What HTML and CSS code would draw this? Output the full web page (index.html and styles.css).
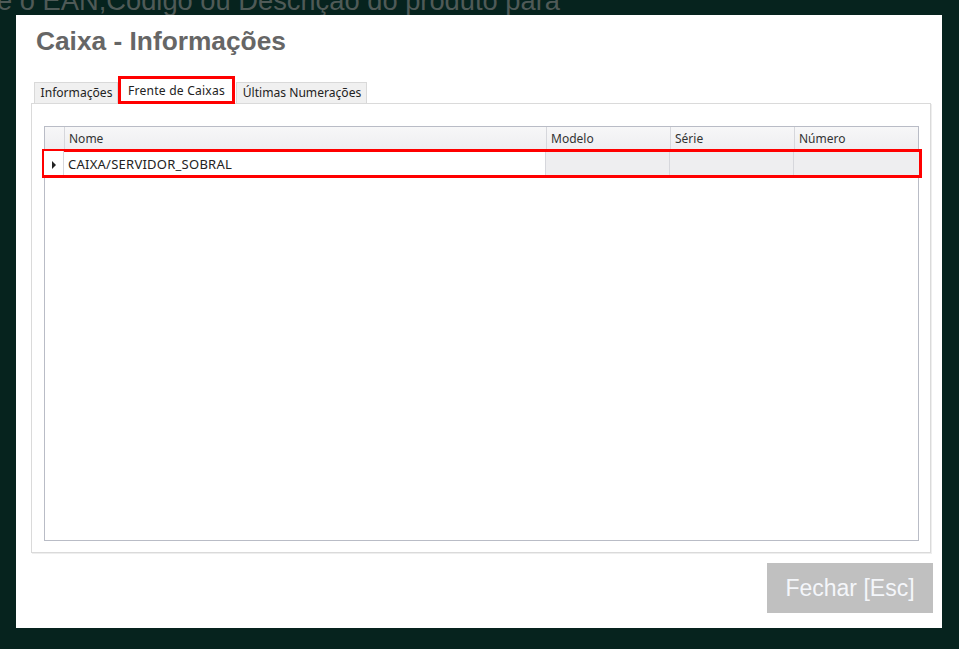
FILE: index.html
```html
<!DOCTYPE html>
<html lang="pt-BR">
<head>
    <meta charset="UTF-8">
    <title>Caixa - Informações</title>
    <link rel="stylesheet" href="styles.css">
</head>
<body>
    <div class="page-behind">e o EAN,Código ou Descrição do produto para</div>

    <div class="dialog">
        <h1>Caixa - Informações</h1>

        <div class="tabs">
            <div class="tab tab-info">Informações</div>
            <div class="tab tab-frente active">Frente de Caixas</div>
            <div class="tab tab-num">Últimas Numerações</div>
        </div>

        <div class="tab-panel">
            <div class="grid">
                <div class="grid-row grid-head">
                    <div class="cell indicator"></div>
                    <div class="cell col-nome">Nome</div>
                    <div class="cell col-modelo">Modelo</div>
                    <div class="cell col-serie">Série</div>
                    <div class="cell col-numero">Número</div>
                </div>
                <div class="grid-row grid-item selected">
                    <div class="cell indicator"><span class="arrow"></span></div>
                    <div class="cell col-nome">CAIXA/SERVIDOR_SOBRAL</div>
                    <div class="cell col-modelo"></div>
                    <div class="cell col-serie"></div>
                    <div class="cell col-numero"></div>
                </div>
            </div>
        </div>

        <div class="actions">
            <button class="btn-close">Fechar [Esc]</button>
        </div>
    </div>
</body>
</html>
```

FILE: styles.css
```css
* {
    margin: 0;
    padding: 0;
    box-sizing: border-box;
}

body {
    background: #06231e;
    width: 959px;
    height: 649px;
    overflow: hidden;
    position: relative;
    font-family: 'Liberation Sans', Arial, sans-serif;
}

.page-behind {
    color: #4f5a57;
    font-size: 27.3px;
    line-height: 28px;
    margin-top: -13px;
    margin-left: -3px;
    white-space: nowrap;
}

/* modal window */
.dialog {
    position: absolute;
    left: 16px;
    top: 15px;
    width: 926px;
    height: 613px;
    background: #fff;
    padding: 0 9px 0 15px;
    display: flex;
    flex-direction: column;
}

h1 {
    color: #666;
    font-size: 26.3px;
    font-weight: bold;
    margin: 11px 0 0 5px;
    height: 30px;
    line-height: 30px;
}

.tabs {
    display: flex;
    align-items: flex-end;
    margin-top: 25px;
    padding-left: 3px;
    height: 22px;
    font-family: 'Noto Sans', 'Open Sans', sans-serif;
    font-size: 12.1px;
}

.tab {
    border: 1px solid #d9d9d9;
    border-bottom: none;
    background: #f0f0f0;
    color: #222;
    height: 21px;
    line-height: 20px;
    text-align: center;
    white-space: nowrap;
}

.tab-info { width: 84px; padding-left: 1px; }
.tab-num { width: 131px; padding-left: 1px; }

.tab.active {
    width: 117px;
    background: #fff;
    height: 28px;
    line-height: 24px;
    border: 3px solid #f00;
    margin-right: 1px;
    position: relative;
    top: 1px;
    letter-spacing: 0.2px;
}

.tab-panel {
    border: 1px solid #dadada;
    box-shadow: 1px 1px 0 #eee;
    height: 450px;
    margin-right: 2px;
    padding: 22px 11px 11px 12px;
}

.grid {
    border: 1px solid #b9bcc6;
    height: 100%;
    font-family: 'Noto Sans', 'Open Sans', sans-serif;
    font-size: 12px;
    color: #222;
}

.grid-row {
    display: flex;
}

.grid-head {
    height: 23px;
    background: linear-gradient(#f7f7f8, #eeeef1);
    border-bottom: 1px solid #d6d7dc;
}

.grid-head .cell {
    color: #333;
    line-height: 24px;
}

.grid-item {
    height: 25px;
    border-bottom: 1px solid #dcdce0;
}

.grid-item.selected {
    background: #eeeef0;
    outline: 3px solid #f00;
    outline-offset: -1px;
    position: relative;
    left: -1px;
    width: 876px;
    margin-top: 1px;
}

.grid-item .cell {
    line-height: 27px;
}

.grid-item .col-nome {
    background: #fff;
    font-size: 13px;
    letter-spacing: 0.25px;
}

.cell {
    border-right: 1px solid #d6d7dc;
    padding: 0 4px;
    white-space: nowrap;
}

.indicator {
    width: 20px;
    position: relative;
}

.grid-item .indicator {
    background: #fff;
}

.arrow {
    position: absolute;
    left: 8px;
    top: 10px;
    border-left: 4px solid #222;
    border-top: 4px solid transparent;
    border-bottom: 4px solid transparent;
}

.col-nome { width: 482px; }
.col-modelo { width: 124px; }
.col-serie { width: 124px; }
.col-numero { flex: 1; border-right: none; }

.actions {
    display: flex;
    justify-content: flex-end;
    margin-top: 10px;
}

.btn-close {
    width: 166px;
    height: 50px;
    background: #c0c0c0;
    color: #f4f6fa;
    border: none;
    font-family: 'Liberation Sans', Arial, sans-serif;
    font-size: 23px;
}
```
